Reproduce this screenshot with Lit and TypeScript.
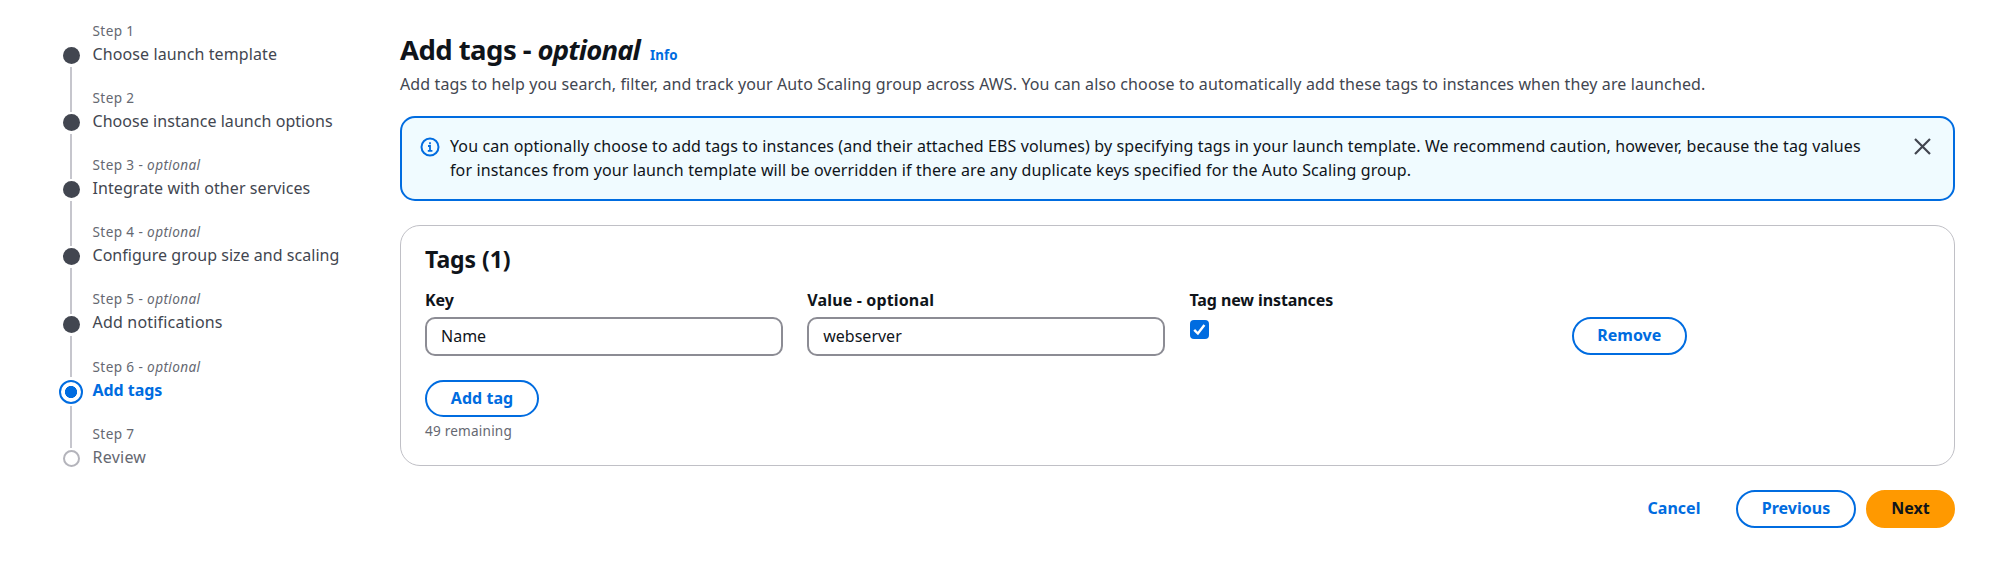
import { LitElement, html, css, nothing } from "lit";
import { customElement, state } from "lit/decorators.js";
import { classMap } from "lit/directives/class-map.js";

type StepState = "done" | "active" | "todo";

interface Step {
  title: string;
  optional?: boolean;
  state: StepState;
  spacing: number;
}

const STEPS: Step[] = [
  { title: "Choose launch template", state: "done", spacing: 0.1 },
  { title: "Choose instance launch options", state: "done", spacing: 0.05 },
  { title: "Integrate with other services", optional: true, state: "done", spacing: 0.07 },
  { title: "Configure group size and scaling", optional: true, state: "done", spacing: 0.03 },
  { title: "Add notifications", optional: true, state: "done", spacing: 0.19 },
  { title: "Add tags", optional: true, state: "active", spacing: -0.05 },
  { title: "Review", state: "todo", spacing: 0.25 },
];

@customElement("wizard-steps")
class WizardSteps extends LitElement {
  static styles = css`
    :host {
      display: block;
    }
    .list {
      list-style: none;
      margin: 0;
      padding: 0;
    }
    .step {
      display: grid;
      grid-template-columns: 24px 1fr;
      column-gap: 9.5px;
      height: 67px;
    }
    .step:nth-child(5) {
      height: 68px;
    }
    .rail {
      display: flex;
      flex-direction: column;
      align-items: center;
    }
    .line {
      width: 2px;
      background: #c6c6cd;
    }
    .before {
      height: 25px;
    }
    .step:nth-child(5) .before {
      height: 26px;
    }
    .active .before {
      height: 21px;
    }
    .step:first-child .before,
    .step:last-child .after {
      background: transparent;
    }
    .after {
      flex: 1;
    }
    .dot {
      box-sizing: border-box;
      flex: none;
      width: 17px;
      height: 17px;
      margin: 2px 0 3px;
      border-radius: 50%;
      background: #424650;
    }
    .active .dot {
      width: 24px;
      height: 24px;
      margin: 3px 0 2px;
      border: 2px solid #006ce0;
      background: radial-gradient(circle, #006ce0 5.7px, #fff 6.4px);
    }
    .todo .dot {
      border: 2px solid #b4b4bb;
      background: #fff;
    }
    .label {
      padding-top: 1px;
      font-size: 13.6px;
      line-height: 20px;
      letter-spacing: 0.38px;
      color: #656871;
    }
    .title {
      margin-top: 1px;
      font-size: 16px;
      line-height: 24px;
      color: #424650;
      white-space: nowrap;
    }
    .active .title {
      font-weight: 700;
      color: #006ce0;
    }
    .todo .title {
      color: #656871;
    }
  `;

  render() {
    return html`<ol class="list">
      ${STEPS.map(
        (s, i) => html`<li class=${classMap({ step: true, [s.state]: true })}>
          <div class="rail">
            <div class="line before"></div>
            <div class="dot"></div>
            <div class="line after"></div>
          </div>
          <div>
            <div class="label">Step ${i + 1}${s.optional ? html` - <i>optional</i>` : nothing}</div>
            <div class="title" style="letter-spacing:${s.spacing}px">${s.title}</div>
          </div>
        </li>`
      )}
    </ol>`;
  }
}

@customElement("app-root")
class AppRoot extends LitElement {
  @state() private checked = true;

  static styles = css`
    :host {
      display: block;
      height: 563px;
      background: #fff;
      color: #0f141a;
      font-family: "Noto Sans", "Open Sans", sans-serif;
      font-size: 16px;
      line-height: 24px;
    }
    .page {
      display: grid;
      grid-template-columns: 341px 1555px;
      padding: 20px 0 0 59px;
    }
    .heading {
      display: flex;
      align-items: baseline;
      height: 52px;
      padding-top: 10px;
      box-sizing: border-box;
    }
    h1 {
      margin: 0;
      font-size: 27.5px;
      line-height: 40px;
      font-weight: 700;
      letter-spacing: -0.55px;
      white-space: pre;
    }
    h1 i {
      letter-spacing: -0.85px;
    }
    .info {
      margin-left: 10px;
      font-size: 13.3px;
      font-weight: 700;
      letter-spacing: 0.1px;
      color: #006ce0;
    }
    .desc {
      margin: 0 0 20px;
      color: #424650;
      letter-spacing: 0.118px;
    }
    .alert {
      box-sizing: border-box;
      display: flex;
      height: 85px;
      padding: 16px 22px 0 18px;
      border: 2px solid #006ce0;
      border-radius: 15px;
      background: #f0fbff;
      letter-spacing: 0.118px;
    }
    .alert p {
      flex: 1;
      margin: 0 0 0 10px;
    }
    .alert svg {
      flex: none;
      margin-top: 2.5px;
    }
    .alert .close {
      display: flex;
      align-items: flex-start;
      flex: none;
      width: 17px;
      height: 24px;
      padding: 4px 0 0;
      border: 0;
      background: none;
    }
    .alert .close svg {
      margin: 0;
    }
    .panel {
      box-sizing: border-box;
      height: 241px;
      margin-top: 24px;
      padding: 17px 24px 0;
      border: 1px solid #c0c0c6;
      border-radius: 20px;
    }
    h2 {
      margin: 0;
      font-size: 23px;
      line-height: 32px;
      font-weight: 700;
      letter-spacing: -0.05px;
    }
    .grid {
      display: grid;
      grid-template-columns: repeat(4, 1fr);
      column-gap: 24px;
      margin-top: 13px;
      height: 68px;
    }
    .name {
      display: block;
      height: 29px;
      font-weight: 700;
    }
    .wide {
      letter-spacing: 0.15px;
    }
    .tight {
      letter-spacing: -0.1px;
    }
    .field {
      box-sizing: border-box;
      display: block;
      width: 358px;
      height: 39px;
      padding: 0 0 1px 14px;
      border: 2px solid #8c8c94;
      border-radius: 10px;
      background: #fff;
      color: #0f141a;
      font: inherit;
    }
    .check {
      display: block;
      width: 19px;
      height: 19px;
      margin-top: 3px;
      padding: 0;
      border: 0;
      border-radius: 4px;
      background: #006ce0;
    }
    .check svg {
      display: block;
    }
    .btn {
      box-sizing: border-box;
      display: block;
      height: 38px;
      padding: 0 0 2px;
      border: 2px solid #006ce0;
      border-radius: 19px;
      background: #fff;
      color: #006ce0;
      font: inherit;
      font-weight: 700;
    }
    .remove {
      width: 115px;
      margin-top: 29px;
    }
    .add {
      width: 114px;
      height: 37px;
      margin-top: 24px;
      padding: 0 0 1px;
      letter-spacing: 0.05px;
    }
    .hint {
      margin-top: 4px;
      font-size: 13.6px;
      line-height: 20px;
      letter-spacing: 0.2px;
      color: #656871;
    }
    .actions {
      display: flex;
      justify-content: flex-end;
      margin-top: 24px;
    }
    .cancel {
      width: 68px;
      margin-right: 28px;
      border-color: transparent;
    }
    .prev {
      width: 120px;
      margin-right: 10px;
    }
    .next {
      width: 89px;
      border-color: #ff9900;
      background: #ff9900;
      color: #0f141a;
    }
  `;

  render() {
    return html`<div class="page">
      <wizard-steps></wizard-steps>
      <main>
        <div class="heading">
          <h1>Add tags - <i>optional</i></h1>
          <span class="info">Info</span>
        </div>
        <p class="desc">Add tags to help you search, filter, and track your Auto Scaling group across AWS. You can also choose to automatically add these tags to instances when they are launched.</p>
        <div class="alert">
          <svg width="20" height="20" viewBox="0 0 20 20" fill="none" stroke="#006ce0" stroke-width="2">
            <circle cx="10" cy="10" r="8.5" />
            <path d="M8 9h2v4.6M7.8 13.9h4.6M10 5.3v2" stroke-width="1.8" />
          </svg>
          <p>You can optionally choose to add tags to instances (and their attached EBS volumes) by specifying tags in your launch template. We recommend caution, however, because the tag values<br />for instances from your launch template will be overridden if there are any duplicate keys specified for the Auto Scaling group.</p>
          <button class="close" aria-label="Close">
            <svg width="17" height="17" viewBox="0 0 17 17" fill="none" stroke="#424650" stroke-width="2.2">
              <path d="M1 1l15 15M16 1L1 16" />
            </svg>
          </button>
        </div>
        <section class="panel">
          <h2>Tags (1)</h2>
          <div class="grid">
            <label><span class="name">Key</span><input class="field" .value=${"Name"} /></label>
            <label><span class="name wide">Value - optional</span><input class="field" .value=${"webserver"} /></label>
            <div>
              <span class="name tight">Tag new instances</span>
              <button class="check" aria-label="Tag new instances" @click=${() => (this.checked = !this.checked)}>
                <svg width="19" height="19" viewBox="0 0 19 19" fill="none" stroke="#fff" stroke-width="2.4">
                  <path d=${this.checked ? "M4.2 9.8l3.7 3.7L14.4 5" : ""} />
                </svg>
              </button>
            </div>
            <div><button class="btn remove">Remove</button></div>
          </div>
          <button class="btn add">Add tag</button>
          <div class="hint">49 remaining</div>
        </section>
        <div class="actions">
          <button class="btn cancel">Cancel</button>
          <button class="btn prev">Previous</button>
          <button class="btn next">Next</button>
        </div>
      </main>
    </div>`;
  }
}
